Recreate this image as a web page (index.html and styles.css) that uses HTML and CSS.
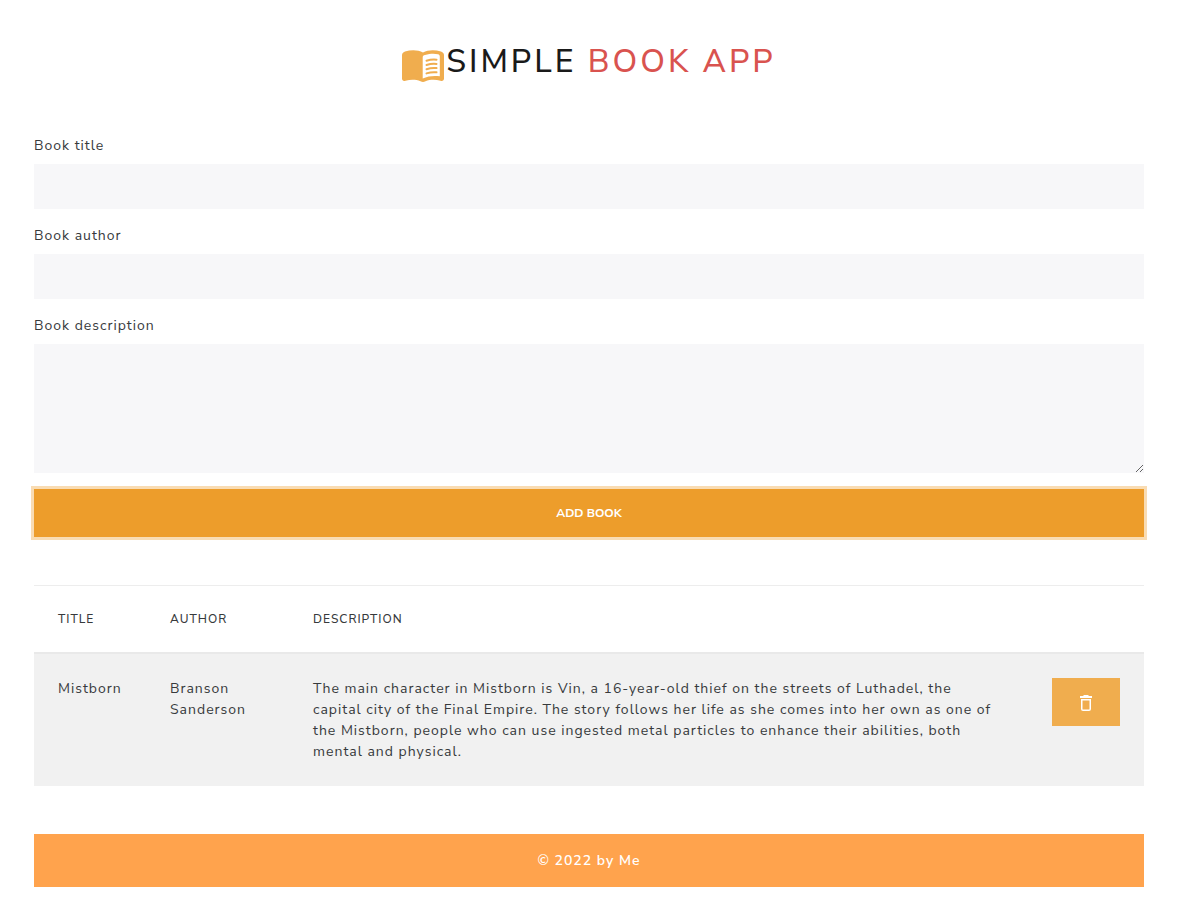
FILE: index.html
```html
<!DOCTYPE html>
<html lang="en">
<head>
<meta charset="utf-8">
<meta name="viewport" content="width=device-width, initial-scale=1">
<title>Simple Book App</title>
<link rel="stylesheet" href="styles.css">
</head>
<body>
<main class="container">
  <h1 class="brand">
    <svg class="brand-icon" viewBox="0 0 42 32" aria-hidden="true">
      <path fill="#f0ad4e" d="M3 1.5C9-.3 16-.3 21 2.500 26-.3 33-.3 39 1.500 41 2.200 42 3.500 42 5.200V28.500C42 30.500 40.500 31.300 38.500 30.700 33 29.400 28 29.500 23.500 31.300 21.800 32.200 20.200 32.200 18.500 31.300 14 29.500 9 29.400 3.500 30.700 1.500 31.300 0 30.500 0 28.500V5.200C0 3.500 1 2.200 3 1.500Z"/>
      <path fill="#fff" d="M20.700 7.500C20.700 6 21.500 5.300 23 5 28 3.500 32 3.300 36 4.200 37.200 4.500 37.800 5.300 37.800 6.500V26.300C32 25.500 26 26 20.700 28.500Z"/>
      <path fill="none" stroke="#f0ad4e" stroke-width="2" stroke-linecap="round" d="M24.500 10.800C27.500 9.800 31 9.300 34.500 9.700M24.500 15C27.500 14 31 13.500 34.500 13.900M24.500 19.200C27.500 18.200 31 17.700 34.500 18.100M24.500 23.400C27.500 22.400 31 21.900 34.500 22.300"/>
    </svg>
    <span>Simple <span class="brand-accent">Book App</span></span>
  </h1>
  <form class="book-form">
    <div class="field">
      <label for="title">Book title</label>
      <input class="control" type="text" id="title">
    </div>
    <div class="field">
      <label for="author">Book author</label>
      <input class="control" type="text" id="author">
    </div>
    <div class="field">
      <label for="description">Book description</label>
      <textarea class="control control-area" id="description" rows="4"></textarea>
    </div>
    <button class="button button-add" type="button">Add book</button>
  </form>
  <table class="books">
    <colgroup><col class="col-title"><col class="col-author"><col><col class="col-action"></colgroup>
    <thead>
      <tr><th scope="col">Title</th><th scope="col">Author</th><th scope="col">Description</th><th></th></tr>
    </thead>
    <tbody>
      <tr>
        <td>Mistborn</td>
        <td>Branson Sanderson</td>
        <td>The main character in Mistborn is Vin, a 16-year-old thief on the streets of Luthadel, the capital city of the Final Empire. The story follows her life as she comes into her own as one of the Mistborn, people who can use ingested metal particles to enhance their abilities, both mental and physical.</td>
        <td>
          <button class="button button-delete" type="button" aria-label="Delete Mistborn">
            <svg class="trash" viewBox="0 0 12 16" aria-hidden="true">
              <path fill="#fff" d="M4 0h4l1 1h3v2H0V1h3z"/>
              <path fill="none" stroke="#fff" stroke-width="1.500" d="M1.750 4.750h8.500v9.200q0 1.300-1.300 1.300h-5.900q-1.300 0-1.300-1.300z"/>
            </svg>
          </button>
        </td>
      </tr>
    </tbody>
  </table>
  <footer class="footer">© 2022 by Me</footer>
</main>
</body>
</html>
```
FILE: styles.css
```css
*, *::before, *::after { box-sizing: border-box; }

body {
  margin: 0;
  background: #fff;
  color: #373a3c;
  font-family: "Nunito Sans", "Open Sans", sans-serif;
  font-size: 14px;
  font-weight: 400;
  line-height: 21px;
  letter-spacing: 1px;
}

.container { padding: 42px 37px 18px 34px; }

.brand {
  display: flex;
  justify-content: center;
  gap: 2px;
  margin: 0 0 53px;
  color: #1a1a1a;
  font-size: 32px;
  font-weight: 500;
  line-height: 40px;
  letter-spacing: 3px;
  text-transform: uppercase;
}
.brand-icon { width: 42px; height: 32px; align-self: flex-end; }
.brand-accent { color: #d9534f; }

.field { margin-bottom: 16px; }
.field label { display: block; margin-bottom: 8px; }

.control {
  display: block;
  width: 100%;
  height: 45px;
  padding: 12px 24px;
  border: 0;
  border-radius: 0;
  background: #f7f7f9;
  color: inherit;
  font: inherit;
}
.control-area { height: 129px; resize: vertical; }

.button {
  display: block;
  height: 48px;
  padding: 0 24px;
  border: 0;
  background: #f0ad4e;
  color: #fff;
  font: 700 12px/18px "Nunito Sans", "Open Sans", sans-serif;
  text-transform: uppercase;
}
.button-add {
  width: 100%;
  background: #ed9d2b;
  box-shadow: 0 0 0 3px #f9dcb3;
}
.button-delete {
  display: flex;
  width: 68px;
  padding-top: 2px;
  align-items: center;
  justify-content: center;
}
.trash { width: 12px; height: 16px; }

.books {
  width: 100%;
  margin: 48px 0;
  border-collapse: collapse;
  table-layout: fixed;
}
.books th, .books td {
  padding: 24px;
  text-align: left;
  vertical-align: top;
}
.books th {
  border-top: 1px solid #ededed;
  border-bottom: 2px solid #e9e9e9;
  font-size: 12px;
  font-weight: 500;
  line-height: 18px;
  text-transform: uppercase;
}
.books tbody tr { background: #f1f1f1; }
.col-title { width: 112px; }
.col-author { width: 143px; }
.col-action { width: 116px; }

.footer {
  padding: 16px;
  background: #ffa34d;
  color: #fff;
  font-weight: 600;
  text-align: center;
}
```
